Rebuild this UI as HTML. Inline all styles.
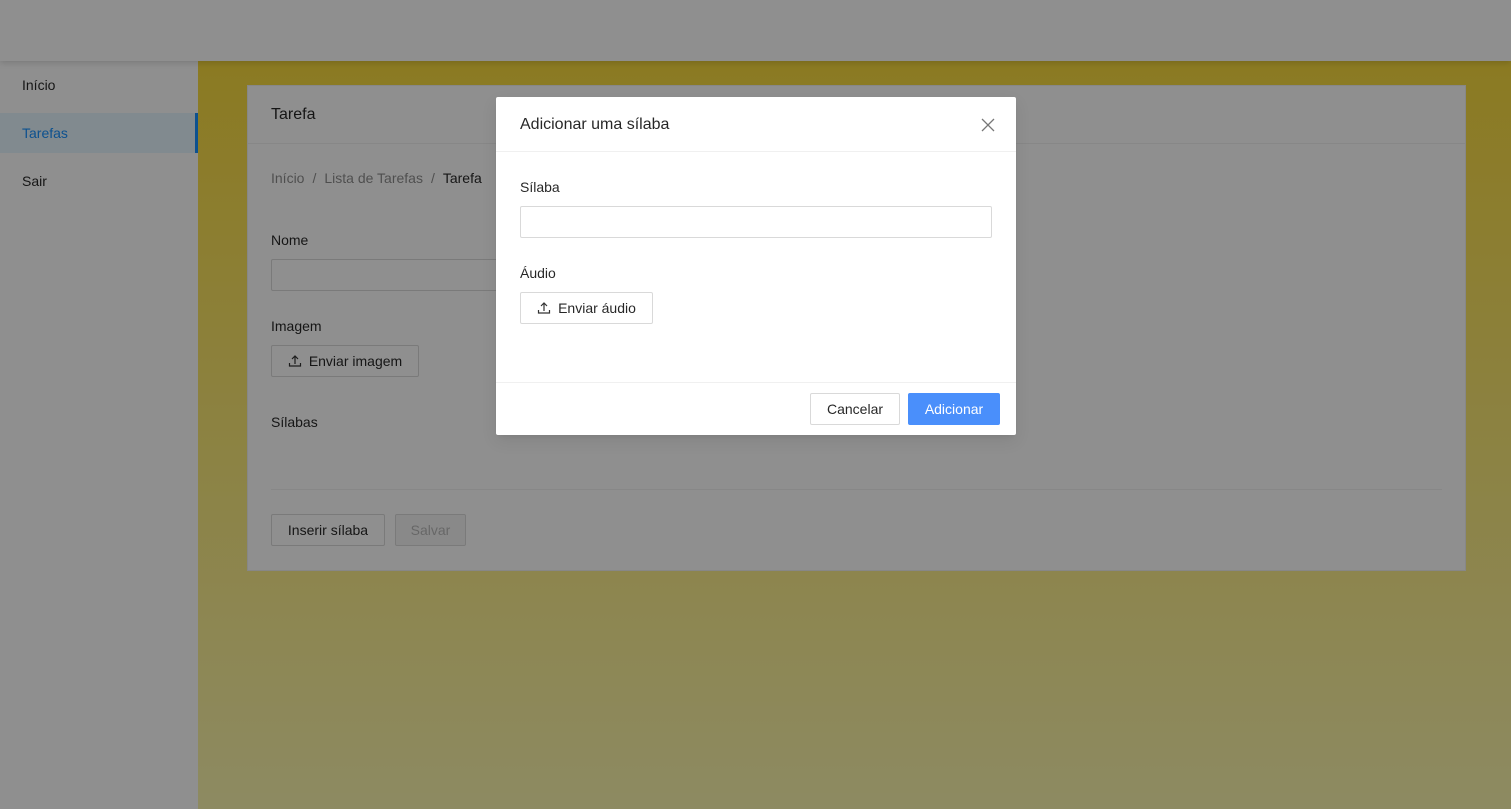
<!DOCTYPE html>
<html><head><meta charset="utf-8"><style>
*{box-sizing:border-box;margin:0;padding:0}
body{width:1511px;height:809px;overflow:hidden;position:relative;font-family:"Liberation Sans",sans-serif;font-size:14px;color:rgba(0,0,0,.85);background:#fff}
.abs{position:absolute}
.hdr{left:0;top:0;width:1511px;height:61px;background:#fff;box-shadow:0 2px 6px rgba(0,0,0,.15);z-index:2}
.side{left:0;top:61px;width:198px;height:748px;background:#fff}
.mi{position:absolute;left:0;width:198px;height:40px;line-height:40px;padding-left:22px}
.main{left:198px;top:61px;width:1313px;height:748px;background:linear-gradient(#f8da3d,#fcf7af)}
.card{left:247px;top:85px;width:1219px;height:486px;background:#fff;border:1px solid #f0f0f0}
.btn{position:absolute;height:32px;border:1px solid #d9d9d9;border-radius:2px;background:#fff;line-height:30px;text-align:center;font-size:14px}
.inp{position:absolute;height:32px;border:1px solid #d9d9d9;border-radius:2px;background:#fff}
.mask{left:0;top:0;width:1511px;height:809px;background:rgba(0,0,0,.44);z-index:5}
.modal{left:496px;top:97px;width:520px;height:338px;background:#fff;border-radius:2px;z-index:6;box-shadow:0 3px 6px -4px rgba(0,0,0,.12),0 6px 16px rgba(0,0,0,.08)}
.sep{margin:0 8px}
</style></head><body>
<div class="abs hdr"></div>
<div class="abs side">
<div class="mi" style="top:4px">Início</div>
<div class="mi" style="top:52px;background:#e6f7ff;color:#1890ff;border-right:3px solid #1890ff">Tarefas</div>
<div class="mi" style="top:100px">Sair</div>
</div>
<div class="abs main"></div>
<div class="abs card">
<div class="abs" style="left:23px;top:20px;font-size:16px;color:rgba(0,0,0,.85)">Tarefa</div>
<div class="abs" style="left:0;top:57px;width:1217px;border-top:1px solid #f0f0f0"></div>
<div class="abs" style="left:23px;top:84px;color:rgba(0,0,0,.45)">Início<span class="sep">/</span>Lista de Tarefas<span class="sep">/</span><span style="color:rgba(0,0,0,.85)">Tarefa</span></div>
<div class="abs" style="left:23px;top:146px">Nome</div>
<div class="inp" style="left:23px;top:173px;width:400px"></div>
<div class="abs" style="left:23px;top:232px">Imagem</div>
<div class="btn" style="left:23px;top:259px;width:148px"><svg width="14" height="14" viewBox="0 0 14 14" style="vertical-align:-2px;margin-right:7px"><path d="M7 10V2M4 5l3-3 3 3M1.5 9v3h11V9" fill="none" stroke="#333" stroke-width="1.2"/></svg>Enviar imagem</div>
<div class="abs" style="left:23px;top:328px">Sílabas</div>
<div class="abs" style="left:23px;top:403px;width:1171px;border-top:1px solid #f0f0f0"></div>
<div class="btn" style="left:23px;top:428px;width:114px">Inserir sílaba</div>
<div class="btn" style="left:147px;top:428px;width:71px;background:#f5f5f5;color:rgba(0,0,0,.25)">Salvar</div>
</div>
<div class="abs mask"></div>
<div class="abs modal">
<div class="abs" style="left:24px;top:19px;font-size:16px;color:rgba(0,0,0,.85)">Adicionar uma sílaba</div>
<svg class="abs" style="left:485px;top:21px" width="14" height="14" viewBox="0 0 14 14"><path d="M1 1L13 13M13 1L1 13" stroke="#777" stroke-width="1.3"/></svg>
<div class="abs" style="left:0;top:54px;width:520px;border-top:1px solid #f0f0f0"></div>
<div class="abs" style="left:24px;top:82px">Sílaba</div>
<div class="inp" style="left:24px;top:109px;width:472px"></div>
<div class="abs" style="left:24px;top:168px">Áudio</div>
<div class="btn" style="left:24px;top:195px;width:133px"><svg width="14" height="14" viewBox="0 0 14 14" style="vertical-align:-2px;margin-right:7px"><path d="M7 10V2M4 5l3-3 3 3M1.5 9v3h11V9" fill="none" stroke="#333" stroke-width="1.2"/></svg>Enviar áudio</div>
<div class="abs" style="left:0;top:285px;width:520px;border-top:1px solid #f0f0f0"></div>
<div class="btn" style="left:314px;top:296px;width:90px">Cancelar</div>
<div class="btn" style="left:412px;top:296px;width:92px;background:#4a8ffb;border-color:#4a8ffb;color:#fff">Adicionar</div>
</div>
</body></html>
